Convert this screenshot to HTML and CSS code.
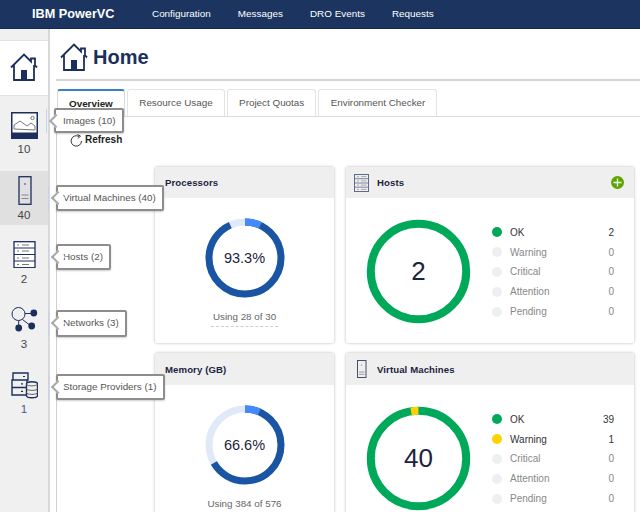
FILE: index.html
```html
<!DOCTYPE html>
<html lang="en">
<head>
<meta charset="utf-8">
<title>IBM PowerVC</title>
<link rel="stylesheet" href="styles.css">
</head>
<body>
<header class="topbar">
  <span class="brand">IBM PowerVC</span>
  <nav class="topnav">
    <a>Configuration</a><a>Messages</a><a>DRO Events</a><a>Requests</a>
  </nav>
</header>
<div class="shell">
  <aside class="sidebar">
    <div class="side-home">
      <svg class="home-icon-sm" viewBox="0 0 28 28"><path d="M1 14.500 14 1.500l7 7V5.500h4v7l2 2M4 12v15h20V12" fill="none" stroke="#1c2f5c" stroke-width="1.800"/><path d="M11 17h6v10h-6z" fill="#1c2f5c"/></svg>
    </div>
    <div class="side-item side-images">
      <svg class="side-icon" viewBox="0 0 27 27"><rect x=".5" y=".5" width="26" height="26" fill="#fff" stroke="#1c2f5c"/><rect y="21" width="27" height="6" fill="#1c2f5c"/><rect x="1" y="1" width="25" height="20" fill="#fff" stroke="#1c2f5c" stroke-width="1"/><path d="M3 17v-4l6-4 7 5 4-3 4 3v4z" fill="none" stroke="#777" stroke-width="1"/><circle cx="21.500" cy="6" r="1.700" fill="none" stroke="#777"/></svg>
      <span class="side-count">10</span>
      <div class="tip tip-images">Images (10)</div>
    </div>
    <div class="side-item side-selected">
      <svg class="side-icon" viewBox="0 0 27 29"><rect x="8" y=".7" width="12" height="27.600" fill="none" stroke="#1c2f5c" stroke-width="1.300"/><circle cx="14" cy="8" r=".8" fill="#1c2f5c"/><path d="M10.500 19h7M10.500 22.500h7" stroke="#888" stroke-width="1"/></svg>
      <span class="side-count">40</span>
      <div class="tip tip-vm">Virtual Machines (40)</div>
    </div>
    <div class="side-item side-hosts">
      <svg class="side-icon" viewBox="0 0 27 27"><rect x="3" y=".7" width="21" height="26" fill="#fff" stroke="#1c2f5c" stroke-width="1.300"/><path d="M3 7h21M3 13.500h21M3 20h21" stroke="#1c2f5c" stroke-width="1"/><path d="M6 4h2M11 4h7M6 10h2M11 10h7M6 17h2M11 17h7M6 23.500h2M11 23.500h7" stroke="#777" stroke-width="1"/></svg>
      <span class="side-count">2</span>
      <div class="tip tip-hosts">Hosts (2)</div>
    </div>
    <div class="side-item">
      <svg class="side-icon" viewBox="0 0 27 27"><circle cx="7.500" cy="8" r="6.500" fill="none" stroke="#1c2f5c" stroke-width="1"/><path d="M14 7.500h8M7.700 14.500v7M11.500 13.500l9 7" stroke="#1c2f5c" stroke-width="1"/><circle cx="22.800" cy="7" r="3.400" fill="#1c2f5c"/><circle cx="7.700" cy="22" r="3.400" fill="#1c2f5c"/><circle cx="20.700" cy="20" r="3.400" fill="#1c2f5c"/></svg>
      <span class="side-count">3</span>
      <div class="tip tip-networks">Networks (3)</div>
    </div>
    <div class="side-item">
      <svg class="side-icon" viewBox="0 0 27 27"><path d="M2 1h15v7H2zM1 8h15v7.500H1zM1 15.500h15V23H1z" fill="#f0f0f0" stroke="#1c2f5c" stroke-width="1.400"/><path d="M12 4.500h2M10 11.800h2M10 19.300h2" stroke="#1c2f5c" stroke-width="1.200"/><path d="M15.500 12c0-3 11-3 11 0v11.500c0 3-11 3-11 0z" fill="#f0f0f0" stroke="#1c2f5c" stroke-width="1.400"/><path d="M15.500 12c0 2.500 11 2.500 11 0M15.500 16.500c0 2.500 11 2.500 11 0M15.500 20.500c0 2.500 11 2.500 11 0" fill="none" stroke="#666" stroke-width="1"/></svg>
      <span class="side-count side-count-blue">1</span>
      <div class="tip tip-storage">Storage Providers (1)</div>
    </div>
  </aside>
  <main class="content">
    <div class="title-row">
      <svg class="home-icon-lg" viewBox="0 0 28 28"><path d="M1 14.500 14 1.500l7 7V5.500h4v7l2 2M4 12v15h20V12" fill="none" stroke="#1c2f5c" stroke-width="1.800"/><path d="M11 17h6v10h-6z" fill="#1c2f5c"/></svg>
      <h1 class="title">Home</h1>
    </div>
    <div class="tabs">
      <span class="tab tab-active">Overview</span>
      <span class="tab">Resource Usage</span>
      <span class="tab">Project Quotas</span>
      <span class="tab">Environment Checker</span>
    </div>
    <div class="panel">
      <div class="refresh">
        <svg class="refresh-icon" viewBox="0 0 13 13"><path d="M9 2.500A5.200 5.200 0 1 0 11.500 7" fill="none" stroke="#333" stroke-width="1"/><path d="M7.500 .5 10.500 2 8 4.500" fill="none" stroke="#333" stroke-width="1"/></svg>
        <span>Refresh</span>
      </div>
      <div class="cards">
        <section class="card">
          <div class="card-head"><span class="card-title">Processors</span></div>
          <div class="card-gauge">
            <div class="donut donut-sm">
              <svg viewBox="0 0 80 80"><circle class="arc" cx="40" cy="40" r="36" pathLength="100" stroke="#dfe9f7" stroke-dasharray="100 0"/><circle class="arc" cx="40" cy="40" r="36" pathLength="100" stroke="#1a55a3" stroke-dasharray="93.300 6.700"/><circle class="arc" cx="40" cy="40" r="36" pathLength="100" stroke="#4589ff" stroke-dasharray="7 93"/></svg>
              <span class="donut-label donut-label-sm">93.3%</span>
            </div>
            <div class="using">Using 28 of 30</div>
          </div>
        </section>
        <section class="card">
          <div class="card-head card-head-icon">
            <svg class="head-icon" viewBox="0 0 15 18"><rect x=".5" y=".5" width="14" height="17" fill="none" stroke="#5d6a8a"/><path d="M.5 4.700h14M.5 9h14M.5 13.200h14" stroke="#5d6a8a" stroke-width=".8"/><path d="M3 2.600h2M7 2.600h5.500M3 6.900h2M7 6.900h5.500M3 11.100h2M7 11.100h5.500M3 15.400h2M7 15.400h5.500" stroke="#999" stroke-width=".8"/></svg>
            <span class="card-title">Hosts</span>
            <svg class="add-icon" viewBox="0 0 13 13"><circle cx="6.500" cy="6.500" r="6.500" fill="#5aa700"/><path d="M6.500 2.500v8M2.500 6.500h8" stroke="#fff" stroke-width="1.300"/></svg>
          </div>
          <div class="card-status">
            <div class="donut donut-lg">
              <svg viewBox="0 0 105 105"><circle class="arc-lg" cx="52.500" cy="52.500" r="47.700" pathLength="100" stroke="#00a85a" stroke-dasharray="100 0"/></svg>
              <span class="donut-label donut-label-lg">2</span>
            </div>
            <ul class="legend">
              <li class="legend-row"><i class="dot dot-ok"></i><span class="legend-name">OK</span><b class="legend-val">2</b></li>
              <li class="legend-row legend-off"><i class="dot"></i><span class="legend-name">Warning</span><b class="legend-val">0</b></li>
              <li class="legend-row legend-off"><i class="dot"></i><span class="legend-name">Critical</span><b class="legend-val">0</b></li>
              <li class="legend-row legend-off"><i class="dot"></i><span class="legend-name">Attention</span><b class="legend-val">0</b></li>
              <li class="legend-row legend-off"><i class="dot"></i><span class="legend-name">Pending</span><b class="legend-val">0</b></li>
            </ul>
          </div>
        </section>
        <section class="card">
          <div class="card-head card-head-tall"><span class="card-title">Memory (GB)</span></div>
          <div class="card-gauge">
            <div class="donut donut-sm">
              <svg viewBox="0 0 80 80"><circle class="arc" cx="40" cy="40" r="36" pathLength="100" stroke="#dfe9f7" stroke-dasharray="100 0"/><circle class="arc" cx="40" cy="40" r="36" pathLength="100" stroke="#1a55a3" stroke-dasharray="66.600 33.400"/><circle class="arc" cx="40" cy="40" r="36" pathLength="100" stroke="#4589ff" stroke-dasharray="6.500 93.500"/></svg>
              <span class="donut-label donut-label-sm">66.6%</span>
            </div>
            <div class="using">Using 384 of 576</div>
          </div>
        </section>
        <section class="card">
          <div class="card-head card-head-tall card-head-icon">
            <svg class="head-icon" viewBox="0 0 15 18"><rect x="3.500" y=".5" width="8.500" height="17" fill="none" stroke="#444f6e"/><circle cx="7.700" cy="5" r=".5" fill="#444f6e"/><path d="M5 12h5.500M5 14.300h5.500" stroke="#888" stroke-width=".8"/></svg>
            <span class="card-title">Virtual Machines</span>
          </div>
          <div class="card-status">
            <div class="donut donut-lg">
              <svg viewBox="0 0 105 105"><circle class="arc-lg" cx="52.500" cy="52.500" r="47.700" pathLength="100" stroke="#00a85a" stroke-dasharray="100 0"/><circle class="arc-lg arc-warn" cx="52.500" cy="52.500" r="47.700" pathLength="100" stroke="#ffd200" stroke-dasharray="2.500 97.500"/></svg>
              <span class="donut-label donut-label-lg">40</span>
            </div>
            <ul class="legend">
              <li class="legend-row"><i class="dot dot-ok"></i><span class="legend-name">OK</span><b class="legend-val">39</b></li>
              <li class="legend-row"><i class="dot dot-warn"></i><span class="legend-name">Warning</span><b class="legend-val">1</b></li>
              <li class="legend-row legend-off"><i class="dot"></i><span class="legend-name">Critical</span><b class="legend-val">0</b></li>
              <li class="legend-row legend-off"><i class="dot"></i><span class="legend-name">Attention</span><b class="legend-val">0</b></li>
              <li class="legend-row legend-off"><i class="dot"></i><span class="legend-name">Pending</span><b class="legend-val">0</b></li>
            </ul>
          </div>
        </section>
      </div>
    </div>
  </main>
</div>
</body>
</html>
```
FILE: styles.css
```css
* { box-sizing: border-box; }
html, body { margin: 0; height: 512px; overflow: hidden; }
body { font-family: "Liberation Sans", Arial, sans-serif; color: #1c2340; background: #fff; display: flex; flex-direction: column; }

.topbar { flex: none; height: 29px; background: #1c3560; color: #fff; display: flex; align-items: center; padding: 0 0 1px 32px; border-bottom: 1px solid #152a50; }
.brand { font-size: 12.7px; font-weight: 700; width: 120px; }
.topnav { display: flex; gap: 27.100px; font-size: 9.900px; }

.shell { flex: 1; display: flex; min-height: 0; }

.sidebar { flex: none; width: 50px; background: #f0f0f0; border-right: 2px solid #d8d8d8; padding-top: 11px; position: relative; z-index: 2; }
.side-home { height: 56px; background: #fff; border-top: 1px solid #e2e2e2; border-bottom: 1px solid #e2e2e2; display: flex; justify-content: center; padding-top: 12px; }
.home-icon-sm { width: 28px; height: 28px; }
.side-item { height: 66px; padding-top: 15px; display: flex; flex-direction: column; align-items: center; position: relative; }
.side-images { height: 75px; padding-top: 16px; }
.side-selected { height: 54px; padding-top: 5px; background: #e0e0e0; }
.side-hosts { padding-top: 16px; }
.side-icon { width: 27px; height: 27px; flex: none; }
.side-selected .side-icon { height: 29px; }
.side-count { font-size: 11.5px; color: #444; line-height: 13px; margin-top: 5px; }
.side-images .side-count, .side-selected .side-count, .side-count-blue { margin-top: 4px; }
.side-count-blue { color: #38608c; }

.tip { position: absolute; left: 56px; height: 26px; padding: 0 6px 0 5px; background: #fff; border: 2px solid #8d8d8d; border-radius: 2px; font-size: 9.850px; line-height: 22px; color: #555; white-space: nowrap; box-shadow: 0 1px 2px rgba(0,0,0,.2); }
.tip::before { content: ""; position: absolute; left: -5px; top: 6px; width: 8px; height: 8px; background: #fff; border-left: 2px solid #a8a8a8; border-bottom: 2px solid #a8a8a8; transform: rotate(45deg); }
.tip::after { content: ""; position: absolute; left: -10px; top: -1px; height: 24px; width: 1px; background: #c5d4ee; }
.tip-images { left: 54px; top: 12px; height: 25px; padding-left: 7px; }
.tip-vm { top: 14px; }
.tip-hosts { top: 19px; }
.tip-networks { top: 19px; height: 27px; }
.tip-storage { top: 17px; }

.content { flex: 1; min-width: 0; padding-left: 6px; display: flex; flex-direction: column; }
.title-row { flex: none; height: 52px; display: flex; align-items: center; border-bottom: 2px solid #d4d4d4; padding: 6px 0 0 4px; gap: 5px; }
.home-icon-lg { width: 28px; height: 28px; }
.title { margin: 0; font-size: 20px; font-weight: 700; color: #1c2f5c; }

.tabs { flex: none; display: flex; gap: 2px; height: 28px; margin-top: 8px; padding-left: 1px; border-bottom: 1px solid #dcdcdc; }
.tab { height: 27px; padding: 0 11px 0 11.500px; font-size: 9.850px; line-height: 26px; color: #555; border: 1px solid #e4e4e4; border-bottom: 0; border-radius: 3px 3px 0 0; background: #fff; }
.tab-active { color: #222; font-weight: 700; border-top: 2px solid #3b7fc4; border-color: #d0d8e4; border-top-color: #3b7fc4; height: 28px; margin-bottom: -1px; padding: 0 11px; line-height: 26px; }

.panel { flex: 1; min-height: 0; border-left: 1px solid #d0d0d0; padding: 0 0 0 13px; overflow: hidden; }
.refresh { display: flex; align-items: flex-start; gap: 2px; height: 50px; padding: 16px 0 0 0; font-size: 10px; font-weight: 700; color: #222; }
.refresh-icon { width: 13px; height: 13px; margin-top: 1px; }
.refresh span { margin-top: 1px; }

.cards { display: grid; grid-template-columns: 179px 288px; grid-template-rows: 176px 176px; column-gap: 12px; row-gap: 10px; margin-left: 85px; }
.card { background: #fff; border-radius: 2px; box-shadow: 0 0 3px rgba(0,0,0,.3); display: flex; flex-direction: column; }
.card-head { flex: none; height: 31px; background: #efefef; display: flex; align-items: center; padding: 0 10px; gap: 8px; }
.card-head-tall { height: 32px; }
.card-head-icon { padding-left: 8px; }
.card-title { font-size: 9.600px; font-weight: 700; color: #1c2340; letter-spacing: .1px; }
.head-icon { width: 15px; height: 18px; flex: none; }
.add-icon { width: 13px; height: 13px; margin-left: auto; }

.card-gauge { flex: 1; display: flex; flex-direction: column; align-items: center; padding-top: 20px; }
.donut { position: relative; display: flex; align-items: center; justify-content: center; flex: none; }
.donut svg { position: absolute; inset: 0; width: 100%; height: 100%; transform: rotate(-90deg); }
.donut-sm { width: 80px; height: 80px; }
.donut-lg { width: 105px; height: 105px; }
.arc { fill: none; stroke-width: 7px; }
.arc-lg { fill: none; stroke-width: 8px; }
.arc-warn { transform: rotate(-9deg); transform-origin: 52.500px 52.500px; }
.donut-label { position: relative; font-weight: 400; color: #1c2340; }
.donut-label-sm { font-size: 14.500px; }
.donut-label-lg { font-size: 26px; }
.using { margin-top: 11px; font-size: 9.800px; line-height: 15px; color: #666; padding: 0 2px 2px; border-bottom: 1px dashed #ccc; }

.card-status { flex: 1; display: flex; padding: 21px 20px 0 20px; gap: 21px; }
.legend { flex: 1; list-style: none; margin: 0; padding: 3.500px 0 0; font-size: 10px; }
.legend-row { display: flex; align-items: center; height: 19.800px; color: #333; }
.legend-off { color: #888; }
.dot { width: 10px; height: 10px; border-radius: 50%; background: #efefef; flex: none; margin-right: 8px; }
.dot-ok { background: #00a85a; }
.dot-warn { background: #ffd200; }
.legend-name { flex: 1; }
.legend-val { font-weight: 400; }
```
